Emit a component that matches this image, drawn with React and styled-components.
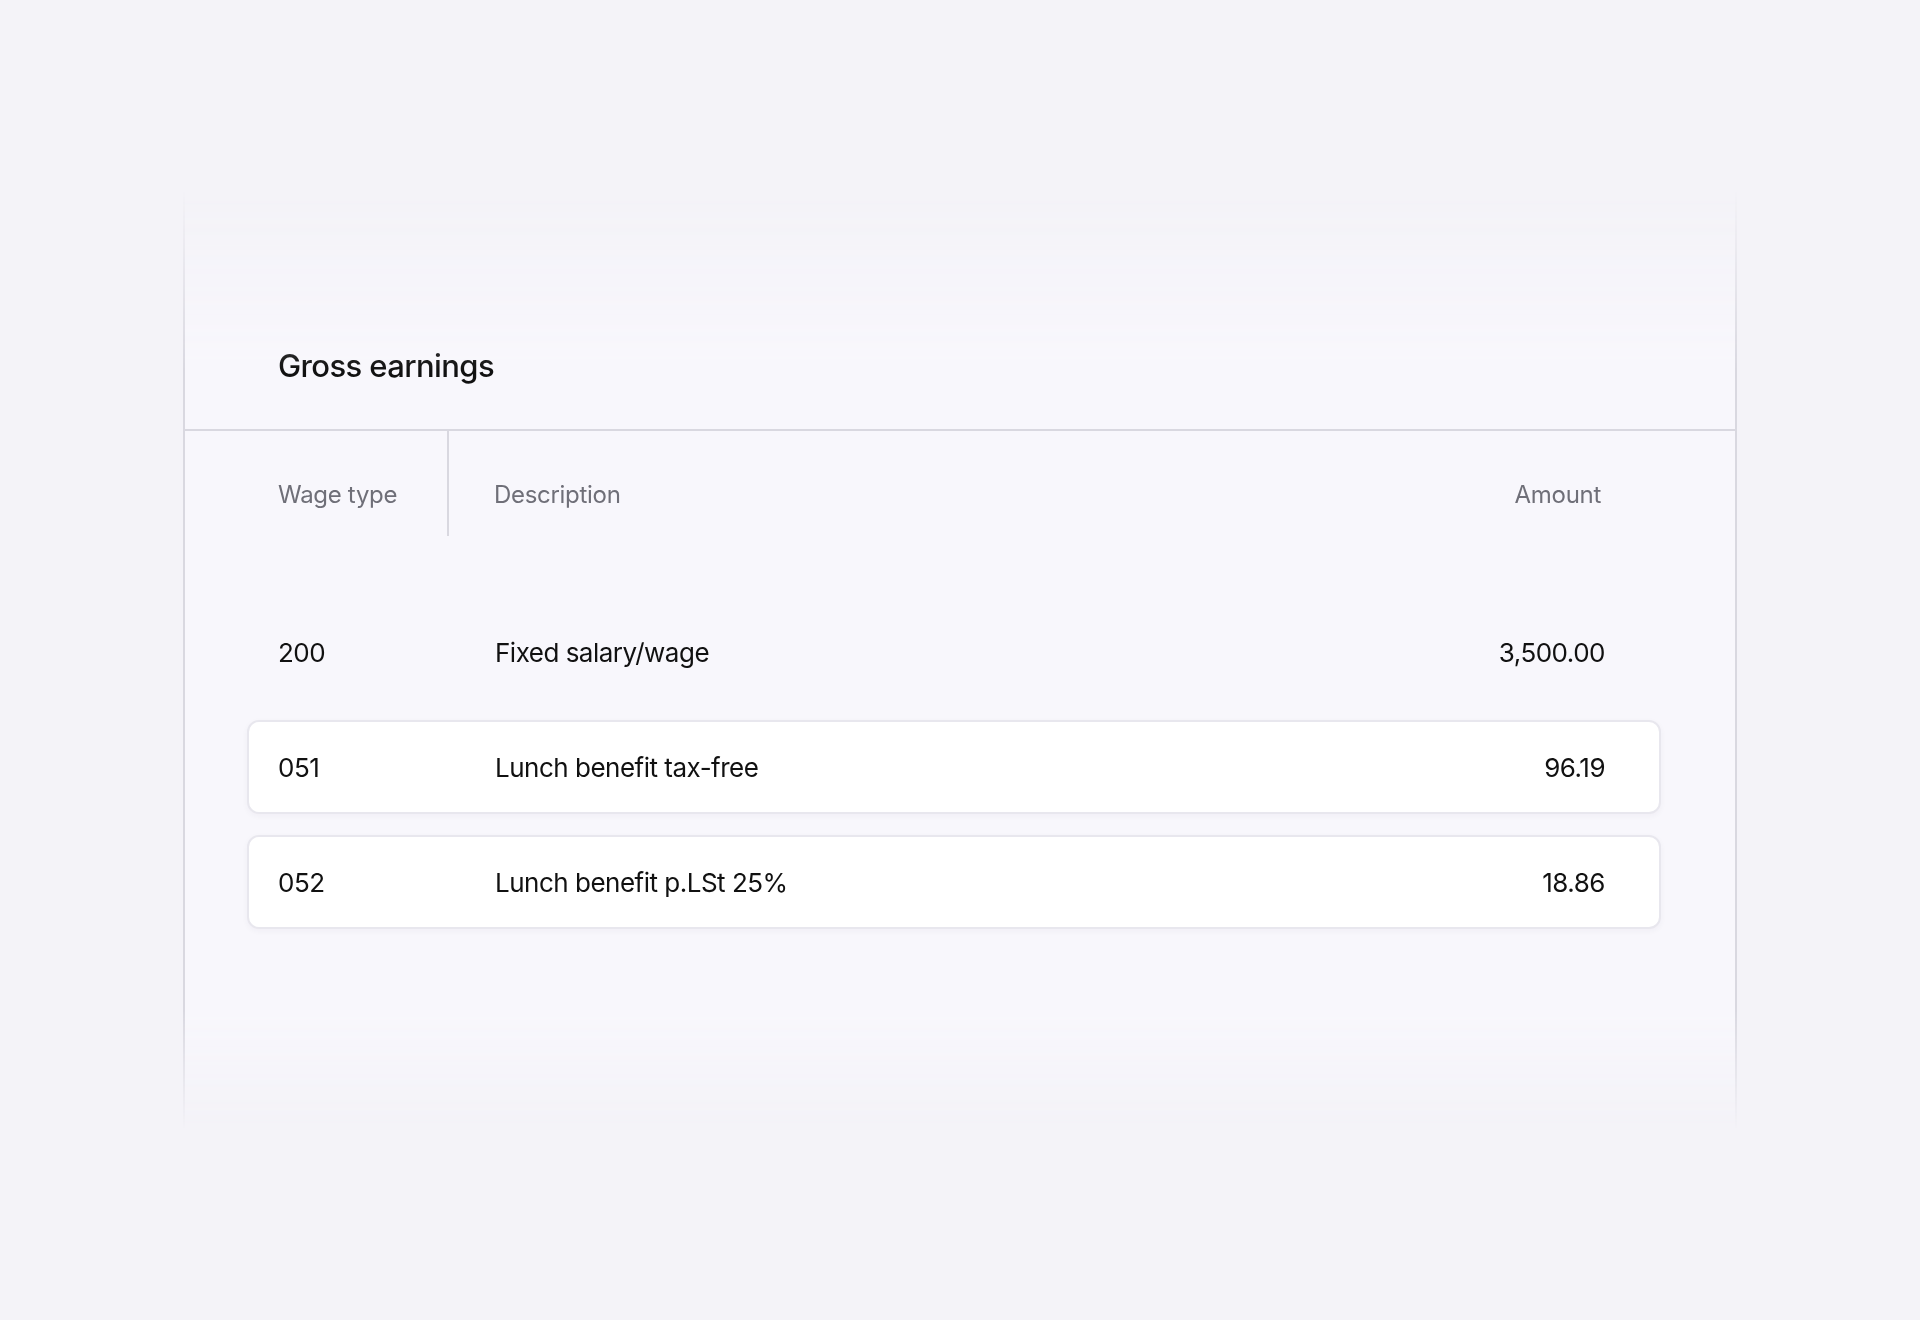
import React from "react";
import styled, { createGlobalStyle } from "styled-components";

const Global = createGlobalStyle`
  body { margin: 0; background: #f4f3f8; font-family: Inter, "Noto Sans", sans-serif; }
`;

const Page = styled.div`
  width: 1920px;
  height: 1320px;
  padding-top: 190px;
  box-sizing: border-box;
`;

const Card = styled.div`
  margin-left: 183px;
  width: 1554px;
  height: 940px;
  box-sizing: border-box;
  border-left: 2px solid #d9d8e0;
  border-right: 2px solid #d9d8e0;
  background: #f8f7fc;
  -webkit-mask-image: linear-gradient(to bottom, transparent 0, #000 180px, #000 820px, transparent 940px);
  mask-image: linear-gradient(to bottom, transparent 0, #000 180px, #000 820px, transparent 940px);
`;

const Title = styled.h2`
  margin: 0;
  height: 241px;
  box-sizing: border-box;
  padding: 157px 0 0 93px;
  font-size: 31px;
  font-weight: 500;
  letter-spacing: -0.6px;
  color: #111;
  border-bottom: 2px solid #d9d8e0;
`;

const Head = styled.div`
  display: grid;
  grid-template-columns: 171px 1fr 200px;
  margin: 0 134px 0 93px;
  height: 105px;
  color: #6f6f78;
  font-size: 24px;
  letter-spacing: -0.3px;
`;

const HeadCell = styled.div`
  display: flex;
  align-items: center;
  padding-top: 22px;
  justify-content: ${(p) => (p.$right ? "flex-end" : "flex-start")};
  ${(p) => p.$divider && "border-right: 2px solid #d9d8e0;"}
  ${(p) => p.$pad && "padding-left: 45px;"}
`;

const Rows = styled.div`
  margin: 69px 74px 0 62px;
  display: flex;
  flex-direction: column;
  gap: 21px;
`;

const Row = styled.div`
  display: grid;
  grid-template-columns: 217px 1fr 200px;
  align-items: center;
  height: 94px;
  padding: 0 54px 0 29px;
  box-sizing: border-box;
  font-size: 26px;
  letter-spacing: -0.5px;
  color: #111;
  border-radius: 12px;
  background: ${(p) => (p.$boxed ? "#fff" : "transparent")};
  border: 2px solid ${(p) => (p.$boxed ? "#e8e7ee" : "transparent")};
  box-shadow: ${(p) => (p.$boxed ? "0 2px 6px rgba(40,30,80,0.04)" : "none")};
`;

const Amount = styled.div`
  text-align: right;
`;

const rows = [
  ["200", "Fixed salary/wage", "3,500.00", false],
  ["051", "Lunch benefit tax-free", "96.19", true],
  ["052", "Lunch benefit p.LSt 25%", "18.86", true],
];

export default function App() {
  return (
    <Page>
      <Global />
      <Card>
        <Title>Gross earnings</Title>
        <Head>
          <HeadCell $divider>Wage type</HeadCell>
          <HeadCell $pad>Description</HeadCell>
          <HeadCell $right>Amount</HeadCell>
        </Head>
        <Rows>
          {rows.map(([c, d, a, b]) => (
            <Row key={c} $boxed={b}>
              <div>{c}</div>
              <div>{d}</div>
              <Amount>{a}</Amount>
            </Row>
          ))}
        </Rows>
      </Card>
    </Page>
  );
}
